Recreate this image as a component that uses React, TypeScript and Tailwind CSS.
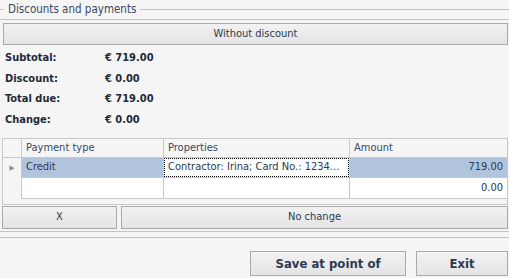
import React from "react"

const font = { fontFamily: "'DejaVu Sans Condensed', 'DejaVu Sans', Verdana, sans-serif" }

function Btn({ children, className = "" }: { children: React.ReactNode; className?: string }) {
  return (
    <div
      className={`flex items-center justify-center border border-[#a9a9a9] bg-gradient-to-b from-[#f2f2f2] to-[#e4e4e4] text-[#2c3a4e] ${className}`}
    >
      {children}
    </div>
  )
}

const summary = [
  ["Subtotal:", "€ 719.00", "h-[21px]"],
  ["Discount:", "€ 0.00", "h-[20px]"],
  ["Total due:", "€ 719.00", "h-[21px]"],
  ["Change:", "€ 0.00", "h-[20px]"],
]

export default function App() {
  return (
    <div
      className="w-[509px] h-[278px] bg-[#f5f5f5] text-[11px] text-[#2c3a4e] overflow-hidden [font-stretch:condensed]"
      style={font}
    >
      {/* group caption */}
      <div className="h-[20px] border-b border-[#c4c4c4]">
        <div className="flex items-center h-[19px]">
          <div className="w-[4px] border-t border-[#c4c4c4]" />
          <span className="px-[4px] text-[11.5px] text-[#3a4a60] leading-none">Discounts and payments</span>
          <div className="flex-1 border-t border-[#c4c4c4]" />
        </div>
      </div>

      <Btn className="ml-[3px] mt-[3px] w-[505px] h-[22px]">Without discount</Btn>

      {/* totals */}
      <div className="mt-[3px] pl-[5px] font-bold text-[#1f2a3a]">
        {summary.map(([label, value, h]) => (
          <div key={label} className={`flex items-center ${h}`}>
            <span className="w-[100px]">{label}</span>
            <span>{value}</span>
          </div>
        ))}
      </div>

      {/* payments grid */}
      <div className="ml-[2px] mt-[8px] w-[506px] h-[67px] border border-[#c8c8c8] bg-[#f5f5f5]">
        <div className="grid grid-cols-[18px_142px_186px_1fr]">
          <div className="h-[19px] border-b border-[#c8c8c8]" />
          <div className="h-[19px] border-b border-l border-[#c8c8c8] pl-[4px] flex items-center text-[#3a4a60]">Payment type</div>
          <div className="h-[19px] border-b border-l border-[#c8c8c8] pl-[4px] flex items-center text-[#3a4a60]">Properties</div>
          <div className="h-[19px] border-b border-l border-[#c8c8c8] pl-[4px] flex items-center text-[#3a4a60]">Amount</div>

          <div className="h-[20px] flex items-center justify-center text-[#8a8a8a] text-[7px]">▶</div>
          <div className="h-[20px] border-l border-b border-[#c8c8c8] bg-[#b0c4de] pl-[4px] flex items-center">Credit</div>
          <div className="h-[20px] border-l border-b border-[#c8c8c8] bg-white flex">
            <div className="flex-1 border border-dotted border-black pl-[3px] flex items-center whitespace-nowrap overflow-hidden">
              Contractor: Irina; Card No.: 1234...
            </div>
          </div>
          <div className="h-[20px] border-l border-b border-[#c8c8c8] bg-[#b0c4de] pr-[4px] flex items-center justify-end">719.00</div>

          <div className="h-[21px]" />
          <div className="h-[21px] border-l border-b border-[#c8c8c8] bg-white" />
          <div className="h-[21px] border-l border-b border-[#c8c8c8] bg-white" />
          <div className="h-[21px] border-l border-b border-[#c8c8c8] bg-white pr-[4px] flex items-center justify-end">0.00</div>
        </div>
      </div>

      <div className="flex gap-[4px] ml-[2px] mt-[1px]">
        <Btn className="w-[115px] h-[23px]">X</Btn>
        <Btn className="w-[387px] h-[23px]">No change</Btn>
      </div>

      <div className="mt-[2px] h-[7px] border-t border-b border-[#c4c4c4]" />

      <div className="flex justify-end gap-[10px] mt-[13px] pr-[1px]">
        <Btn className="w-[156px] h-[25px] text-[13px] font-bold">Save at point of</Btn>
        <Btn className="w-[92px] h-[25px] text-[13px] font-bold">Exit</Btn>
      </div>
    </div>
  )
}
